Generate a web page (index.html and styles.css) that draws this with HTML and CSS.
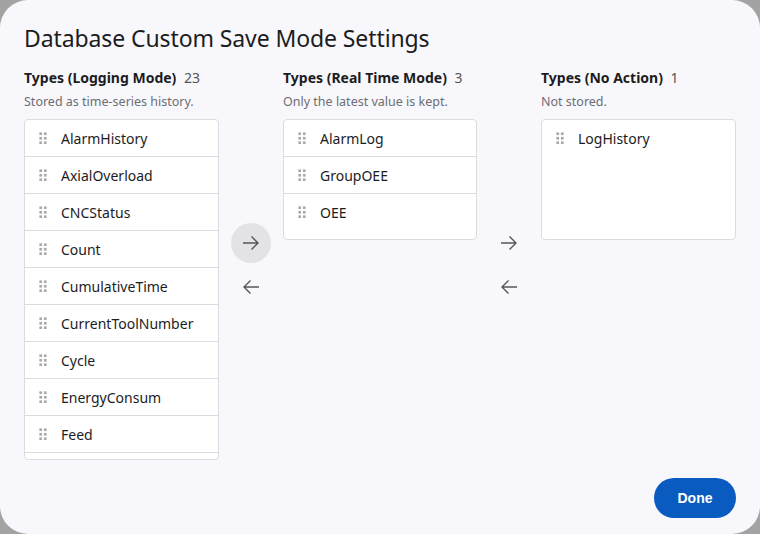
FILE: index.html
```html
<!DOCTYPE html>
<html lang="en">
<head>
  <meta charset="UTF-8" />
  <title>Database Custom Save Mode Settings</title>
  <link rel="stylesheet" href="styles.css">
</head>
<body>

  <div class="dialog">
    <h1>Database Custom Save Mode Settings</h1>

    <div class="columns">
      <div class="col">
        <div class="col-head">Types (Logging Mode) <span class="count">23</span></div>
        <div class="col-sub">Stored as time-series history.</div>
        <ul class="list list-tall">
          <li><span class="grip"></span>AlarmHistory</li>
          <li><span class="grip"></span>AxialOverload</li>
          <li><span class="grip"></span>CNCStatus</li>
          <li><span class="grip"></span>Count</li>
          <li><span class="grip"></span>CumulativeTime</li>
          <li><span class="grip"></span>CurrentToolNumber</li>
          <li><span class="grip"></span>Cycle</li>
          <li><span class="grip"></span>EnergyConsum</li>
          <li><span class="grip"></span>Feed</li>
          <li class="more"></li>
        </ul>
      </div>

      <div class="moves">
        <button class="move active" title="Move right">
          <svg width="18" height="18" viewBox="0 0 18 18"><path d="M1 9h15M9.5 2.5 16 9l-6.5 6.5" fill="none" stroke="currentColor" stroke-width="1.4"/></svg>
        </button>
        <button class="move" title="Move left">
          <svg width="18" height="18" viewBox="0 0 18 18"><path d="M17 9H2M8.5 2.5 2 9l6.5 6.5" fill="none" stroke="currentColor" stroke-width="1.4"/></svg>
        </button>
      </div>

      <div class="col">
        <div class="col-head">Types (Real Time Mode) <span class="count">3</span></div>
        <div class="col-sub">Only the latest value is kept.</div>
        <ul class="list">
          <li><span class="grip"></span>AlarmLog</li>
          <li><span class="grip"></span>GroupOEE</li>
          <li><span class="grip"></span>OEE</li>
        </ul>
      </div>

      <div class="moves">
        <button class="move" title="Move right">
          <svg width="18" height="18" viewBox="0 0 18 18"><path d="M1 9h15M9.5 2.5 16 9l-6.5 6.5" fill="none" stroke="currentColor" stroke-width="1.4"/></svg>
        </button>
        <button class="move" title="Move left">
          <svg width="18" height="18" viewBox="0 0 18 18"><path d="M17 9H2M8.5 2.5 2 9l6.5 6.5" fill="none" stroke="currentColor" stroke-width="1.4"/></svg>
        </button>
      </div>

      <div class="col">
        <div class="col-head">Types (No Action) <span class="count">1</span></div>
        <div class="col-sub">Not stored.</div>
        <ul class="list">
          <li><span class="grip"></span>LogHistory</li>
        </ul>
      </div>
    </div>

    <div class="footer">
      <button class="done">Done</button>
    </div>
  </div>

</body>
</html>
```

FILE: styles.css
```css
html, body {
  height: 100%;
}

body {
  margin: 0;
  background: #a3a3a3;
  font-family: "Noto Sans", "Open Sans", sans-serif;
  color: #1c1c1e;
  overflow: hidden;
}

.dialog {
  box-sizing: border-box;
  height: 100%;
  background: #f8f8fc;
  border-radius: 28px;
  padding: 21px 24px 16px;
  display: flex;
  flex-direction: column;
}

h1 {
  margin: 0;
  font-size: 23px;
  font-weight: 400;
  line-height: 34px;
  letter-spacing: -0.1px;
}

.columns {
  display: grid;
  grid-template-columns: 195px 64px 194px 64px 195px;
  margin-top: 13px;
}

.col-head {
  font-size: 14px;
  font-weight: 700;
  line-height: 20px;
}

.count {
  font-weight: 400;
  color: #555;
  margin-left: 4px;
}

.col-sub {
  font-size: 12.5px;
  color: #6d6d72;
  line-height: 18px;
  margin-top: 5px;
}

.list {
  list-style: none;
  margin: 8px 0 0;
  padding: 0;
  background: #fff;
  border: 1px solid #dcdcdf;
  border-radius: 4px;
  height: 121px;
  box-sizing: border-box;
  overflow: hidden;
}

.list-tall {
  height: 341px;
}

.list li {
  height: 36px;
  border-bottom: 1px solid #dcdcdf;
  display: flex;
  align-items: center;
  padding-left: 14px;
  font-size: 14px;
}

.list li:last-child {
  border-bottom: none;
}

.grip {
  width: 8px;
  height: 12px;
  margin-right: 14px;
  background-image: radial-gradient(circle, #a9a9ad 1.3px, transparent 1.5px);
  background-size: 4.5px 4.5px;
  background-position: -0.5px -0.5px;
}

.moves {
  display: flex;
  flex-direction: column;
  align-items: center;
  gap: 4px;
  padding-top: 155px;
}

.move {
  width: 40px;
  height: 40px;
  border: none;
  border-radius: 50%;
  background: transparent;
  color: #555;
  display: flex;
  align-items: center;
  justify-content: center;
  padding: 0;
  cursor: pointer;
}

.move.active {
  background: #e3e3e6;
}

.footer {
  margin-top: auto;
  display: flex;
  justify-content: flex-end;
}

.done {
  width: 82px;
  height: 40px;
  border: none;
  border-radius: 20px;
  background: #0a5bc0;
  color: #fff;
  font-family: "Liberation Sans", Arial, sans-serif;
  font-weight: 700;
  font-size: 14px;
  cursor: pointer;
}
```
